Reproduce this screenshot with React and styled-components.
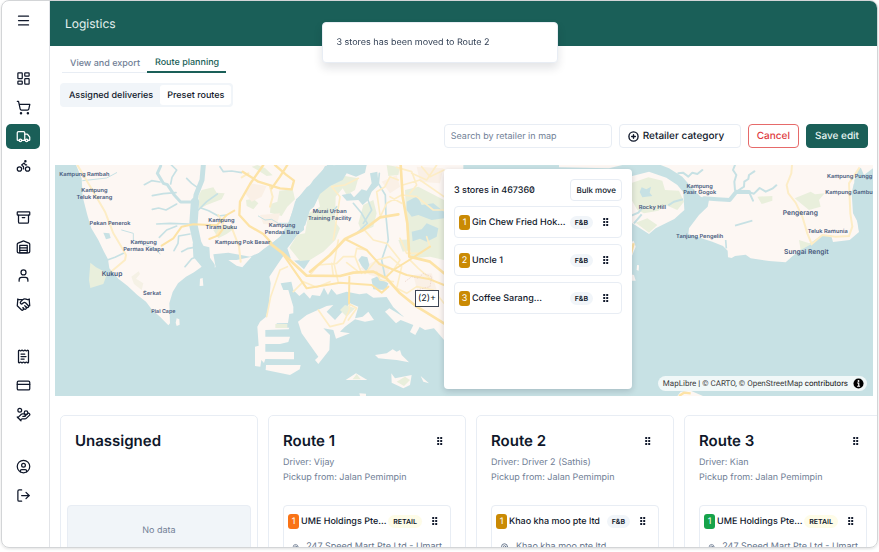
import React from "react";
import styled, { createGlobalStyle, css } from "styled-components";
import {
  Menu, LayoutDashboard, ShoppingCart, Truck, Bike, Archive, User,
  Handshake, ReceiptText, CreditCard, HandCoins, CircleUser, LogOut, CirclePlus, MapPin,
} from "lucide-react";

const c = {
  brand: "#1a5f58",
  ink: "#0f172a",
  body: "#334155",
  muted: "#718096",
  line: "#e8edf4",
  soft: "#f1f5f9",
  water: "#c7e1e4",
  land: "#fdf7f3",
  park: "#e9efdc",
  road: "#fde3a6",
  lane: "#fdedc6",
  label: "#47597c",
};

const Global = createGlobalStyle`
  *, *::before, *::after { box-sizing: border-box; }
  body { margin: 0; background: #fff; text-rendering: geometricPrecision; }
  body, button, input { font-family: Inter, "Liberation Sans", sans-serif; }
  button, input { text-rendering: inherit; }
  h1, h2, h3, p, ul { margin: 0; padding: 0; }
  button { cursor: pointer; }
`;

const Frame = styled.div`
  display: flex;
  height: calc(100vh - 4px);
  margin: 0 1px 4px;
  border: 1px solid #d3d5d7;
  border-radius: 8px;
  overflow: hidden;
  box-shadow: 0 1px 3px rgba(0, 0, 0, 0.12);
  color: ${c.ink};
`;

const Sidebar = styled.nav`
  flex: none;
  width: 48px;
  display: flex;
  flex-direction: column;
  gap: 27px;
  padding: 7px 4px;
  border-right: 1px solid #e2e4e8;
`;

const NavGroup = styled.div`
  display: flex;
  flex-direction: column;
  gap: 4px;
  &:first-child { margin-bottom: 6px; }
`;

const NavButton = styled.button`
  display: grid;
  place-items: center;
  width: 34px;
  height: 25px;
  padding: 0;
  border: 0;
  border-radius: 5px;
  background: ${(p) => (p.$active ? c.brand : "transparent")};
  color: ${(p) => (p.$active ? "#fff" : c.ink)};
`;

const Main = styled.main`
  flex: 1;
  min-width: 0;
  display: flex;
  flex-direction: column;
`;

const Header = styled.header`
  flex: none;
  display: flex;
  align-items: center;
  height: 45px;
  padding: 0 15px;
  background: ${c.brand};
`;

const Title = styled.h1`
  font-size: 12px;
  font-weight: 400;
  line-height: 16px;
  color: #e6f2f0;
`;

const Toast = styled.div`
  position: fixed;
  top: 22px;
  left: 50%;
  width: 236px;
  transform: translateX(-50%);
  padding: 13px 14px;
  border: 1px solid ${c.line};
  border-radius: 4px;
  background: #fff;
  box-shadow: 0 5px 10px rgba(15, 23, 42, 0.12);
  font-size: 9px;
  line-height: 13px;
  color: ${c.body};
  z-index: 5;
`;

const Tabs = styled.div`
  display: flex;
  margin: 8px 12px 0;
`;

const Tab = styled.button`
  height: 19px;
  padding: 1px 7px 0 8px;
  border: 0;
  border-bottom: ${(p) => (p.$active ? `2px solid ${c.brand}` : `1px solid ${c.line}`)};
  background: none;
  font-size: 9px;
  font-weight: 500;
  line-height: 16px;
  color: ${(p) => (p.$active ? c.brand : c.muted)};
`;

const Segments = styled.div`
  display: flex;
  align-self: flex-start;
  margin: 10px 10px 0;
  padding: 2px;
  border-radius: 4px;
  background: ${c.soft};
`;

const Segment = styled.button`
  height: 20px;
  padding: 0 7px;
  border: 0;
  border-radius: 3px;
  background: ${(p) => (p.$active ? "#fff" : "transparent")};
  font-size: 9px;
  font-weight: 500;
  color: ${c.ink};
`;

const Toolbar = styled.div`
  display: flex;
  justify-content: flex-end;
  gap: 7px;
  margin: 17px 9px 0;
`;

const control = css`
  height: 24px;
  border: 1px solid ${(p) => p.$edge || c.line};
  border-radius: 4px;
  background: ${(p) => p.$fill || "#fff"};
`;

const Search = styled.input`
  ${control}
  width: 168px;
  padding: 0 6px;
  font-size: 9px;
  color: ${c.body};
  &::placeholder { color: ${c.muted}; opacity: 1; }
`;

const Action = styled.button`
  ${control}
  display: flex;
  align-items: center;
  gap: 4px;
  padding: 0 8px;
  font-size: 10px;
  font-weight: 500;
  color: ${(p) => p.$text || c.ink};
`;

const CategoryAction = styled(Action)`
  width: 122px;
`;

const MapArea = styled.section`
  position: relative;
  flex: none;
  margin: 17px 4px 0 5px;
  aspect-ratio: 818 / 231;
  background: ${c.water};
`;

const MapDrawing = styled.svg`
  display: block;
  width: 100%;
  height: 100%;
  text { font-family: Inter, "Liberation Sans", sans-serif; font-weight: 600; fill: ${c.label}; text-anchor: middle; }
`;

const Marker = styled.button`
  position: absolute;
  left: 44%;
  top: 54%;
  height: 17px;
  padding: 0 2px;
  border: 1px solid #3c4454;
  background: #fff;
  font-size: 9px;
  line-height: 15px;
  color: ${c.ink};
`;

const StorePanel = styled.aside`
  position: absolute;
  left: calc(50% - 20px);
  top: 4px;
  bottom: 7px;
  width: 188px;
  display: flex;
  flex-direction: column;
  gap: 6px;
  padding: 10px;
  border-radius: 4px;
  background: #fff;
  box-shadow: 0 2px 6px rgba(15, 23, 42, 0.18);
`;

const PanelHead = styled.div`
  display: flex;
  align-items: center;
  justify-content: space-between;
  margin-bottom: -1px;
`;

const PanelTitle = styled.h2`
  font-size: 9px;
  font-weight: 500;
  font-variant-numeric: slashed-zero;
`;

const BulkButton = styled.button`
  ${control}
  height: 22px;
  padding: 0 5px;
  font-size: 8px;
  font-weight: 500;
  color: ${c.ink};
`;

const StoreCard = styled.div`
  ${control}
  height: auto;
  padding: ${(p) => (p.$tall ? "7px 4px 24px" : "7px 4px")};
`;

const StoreLine = styled.div`
  display: flex;
  align-items: center;
  gap: 2px;
  height: 16px;
`;

const Order = styled.span`
  flex: none;
  width: 11px;
  border-radius: 3px;
  background: ${(p) => p.$tone};
  color: #fff;
  font-size: 9px;
  line-height: 15px;
  text-align: center;
`;

const StoreName = styled.h3`
  flex: 1;
  min-width: 0;
  white-space: nowrap;
  font-size: 9px;
  font-weight: 500;
  line-height: 15px;
`;

const Tag = styled.span`
  padding: 0 5px;
  border-radius: 7px;
  background: ${(p) => (p.$retail ? "#fefce8" : c.soft)};
  font-size: 7px;
  font-weight: 600;
  line-height: 13px;
`;

const GripButton = styled.button`
  display: grid;
  place-items: center;
  flex: none;
  width: 22px;
  height: 12px;
  padding: 0;
  border: 0;
  background: none;
  color: ${c.ink};
`;

const Address = styled.p`
  display: flex;
  align-items: center;
  gap: 7px;
  margin: 12px 4px 0;
  font-size: 9px;
  line-height: 12px;
  white-space: nowrap;
  color: #64748b;
`;

const Attribution = styled.div`
  position: absolute;
  right: 6px;
  bottom: 5px;
  display: flex;
  align-items: center;
  gap: 5px;
  height: 15px;
  padding: 0 3px 0 5px;
  border-radius: 8px;
  background: rgba(255, 255, 255, 0.75);
  font: 8px/15px Roboto, Arial, sans-serif;
  color: #111;
  a { color: #404040; text-decoration: none; }
`;

const Board = styled.section`
  flex: 1;
  min-height: 0;
  display: flex;
  gap: 10px;
  margin: 19px 0 0 10px;
  overflow: hidden;
`;

const Column = styled.article`
  flex: none;
  width: 198px;
  height: 240px;
  padding: 14px;
  border: 1px solid ${c.line};
  border-radius: 5px;
`;

const ColumnHead = styled.div`
  display: flex;
  align-items: center;
  justify-content: space-between;
  height: 22px;
`;

const ColumnTitle = styled.h2`
  font-size: 15px;
  font-weight: 600;
  line-height: 22px;
`;

const Details = styled.div`
  height: 53px;
  padding-top: 3px;
  font-size: 9px;
  line-height: 15px;
  color: ${c.muted};
`;

const Empty = styled.div`
  margin: 0 -8px;
  padding: 18px 0 70px;
  border: 1px solid ${c.line};
  border-radius: 4px;
  background: ${c.soft};
  font-size: 9px;
  line-height: 14px;
  text-align: center;
  color: ${c.muted};
`;

function WarehouseIcon({ size, strokeWidth }) {
  return (
    <svg width={size} height={size} viewBox="0 0 24 24" fill="none" stroke="currentColor" strokeWidth={strokeWidth} strokeLinecap="round" strokeLinejoin="round">
      <path d="M22 8.35V20a2 2 0 0 1-2 2H4a2 2 0 0 1-2-2V8.35A2 2 0 0 1 3.26 6.5l8-3.2a2 2 0 0 1 1.48 0l8 3.2A2 2 0 0 1 22 8.35Z" />
      <path d="M6 18h12M6 14h12" />
      <rect x="6" y="10" width="12" height="12" />
    </svg>
  );
}

const navigation = [
  [["Menu", Menu]],
  [["Dashboard", LayoutDashboard], ["Orders", ShoppingCart], ["Logistics", Truck], ["Riders", Bike]],
  [["Inventory", Archive], ["Warehouse", WarehouseIcon], ["Customers", User], ["Partners", Handshake]],
  [["Invoices", ReceiptText], ["Payments", CreditCard], ["Payouts", HandCoins]],
  [["Account", CircleUser], ["Log out", LogOut]],
];

const gold = "#ca8a04";

const panelStores = [
  { order: 1, name: "Gin Chew Fried Hok...", tone: gold, tag: "F&B" },
  { order: 2, name: "Uncle 1", tone: gold, tag: "F&B" },
  { order: 3, name: "Coffee Sarang...", tone: gold, tag: "F&B" },
];

const routes = [
  { name: "Route 1", driver: "Vijay", store: { order: 1, name: "UME Holdings Pte...", tone: "#f97316", tag: "RETAIL", address: "247 Speed Mart Pte Ltd - Umart" } },
  { name: "Route 2", driver: "Driver 2 (Sathis)", store: { order: 1, name: "Khao kha moo pte ltd", tone: gold, tag: "F&B", address: "Khao kha moo pte ltd" } },
  { name: "Route 3", driver: "Kian", store: { order: 1, name: "UME Holdings Pte...", tone: "#16a34a", tag: "RETAIL", address: "247 Speed Mart Pte Ltd - Umart" } },
];

function Grip() {
  return (
    <GripButton aria-label="Reorder">
      <svg width="6" height="8" viewBox="0 0 6 8" fill="currentColor" aria-hidden="true">
        {[0, 3, 6].map((y) => [0, 3].map((x) => <rect key={`${x}-${y}`} x={x + 0.2} y={y} width="2" height="2" rx="0.5" />))}
      </svg>
    </GripButton>
  );
}

function Store({ store }) {
  return (
    <StoreCard $tall={Boolean(store.address)}>
      <StoreLine>
        <Order $tone={store.tone}>{store.order}</Order>
        <StoreName>{store.name}</StoreName>
        <Tag $retail={store.tag === "RETAIL"}>{store.tag}</Tag>
        <Grip />
      </StoreLine>
      {store.address && (
        <Address><MapPin size={9} strokeWidth={2.5} />{store.address}</Address>
      )}
    </StoreCard>
  );
}

const places = [
  [88, 29, 17, "Kampung Rambah"], [118, 77, 17, "Kampung"], [118, 98, 17, "Teluk Kerang"],
  [165, 177, 17, "Pekan Penerok"], [266, 234, 17, "Kampung"], [266, 254, 17, "Permas Kelapa"],
  [171, 330, 20, "Kukup"], [291, 388, 17, "Serkat"], [325, 440, 16, "Piai Cape"],
  [499, 168, 17, "Kampung"], [499, 188, 17, "Tiram Duku"], [563, 234, 17, "Kampung Pok Besar"],
  [681, 183, 17, "Kampung"], [681, 203, 17, "Pendas Baru"],
  [824, 141, 17, "Murai Urban"], [824, 161, 17, "Training Facility"],
  [1792, 128, 17, "Rocky Hill"], [1934, 65, 17, "Kampung"], [1934, 85, 17, "Pasir Gogok"],
  [1934, 215, 17, "Tanjung Pengelih"], [2236, 146, 20, "Pengerang"], [2318, 202, 17, "Teluk Ramunia"],
  [2254, 264, 20, "Sungai Rengit"], [2384, 35, 17, "Kampung Pungg"], [2382, 85, 17, "Kampung Gambu"],
];

function CoastMap() {
  return (
    <MapDrawing viewBox="0 0 2454 693" preserveAspectRatio="xMidYMid slice" role="img" aria-label="Map of the strait">
      <rect width="2454" height="693" fill={c.water} />
      {/* western mainland */}
      <g transform="translate(-15 -15)">
        <path fill={c.land} d="M78 15L95 55L98 110L112 165L124 205L145 240L162 275L174 298L178 325L205 356L233 378L262 405L288 425L305 448L330 470L355 496L360 490L358 430L368 396L384 370L408 350L432 337L455 320L430 290L428 250L478 262L482 322L497 322L490 283L535 278L600 290L628 278L660 255L692 228L716 185L735 135L738 118L770 90L790 60L832 15Z" />
        <path fill={c.land} d="M535 300L560 300L605 290L577 322L560 317Z" />
        <path fill={c.park} d="M121 308L138 322L160 333L170 345L160 372L121 384L117 360Z" />
        <path fill={c.land} d="M450 356L458 354L460 377L449 378ZM380 475L388 478L389 494L380 498L377 488Z" />
        <g fill={c.park}>
          <path d="M445 108L455 90L490 82L500 98L524 100L515 118L470 135L447 148ZM588 120L610 116L625 130L610 148L590 138ZM688 92L728 88L735 118L712 140L695 168L660 158L662 132L682 125ZM605 20L622 15L645 24L668 46L650 48L628 34ZM490 210L530 195L555 205L530 222L505 235Z" />
          <path d="M160 218L178 220L182 234L168 238Z" fill={c.water} />
          <path d="M244 350L266 334L270 342L258 356L280 370L275 390L252 372Z" fill="#f5f1e5" />
        </g>
        <path fill="#faf0e6" d="M600 70L650 78L635 110L605 125L585 100ZM630 165L690 160L680 195L640 192Z" />
        <g fill="none" stroke={c.water} strokeLinecap="round" strokeLinejoin="round">
          <path strokeWidth="15" d="M460 15L456 60L438 105L432 155L430 200" />
          <path strokeWidth="25" d="M435 125L430 195L442 250L466 295L482 318" />
          <path strokeWidth="9" d="M332 18L322 40L340 70L352 74L372 104L392 126L425 126" />
          <path strokeWidth="5" d="M364 15L380 30L366 52L362 72M283 74L305 62L330 66M410 55L425 70L446 85M307 107L340 101L378 98M307 148L326 144L348 150L380 132M320 192L360 190L415 192M328 232L350 210L380 198M372 272L384 250L386 228L420 222M395 275L412 266L432 262M405 320L425 296L440 290M445 150L470 125L502 102M455 145L476 152L505 168L530 165M510 20L520 35L545 33L575 38M172 300L195 292L220 280" />
          <path strokeWidth="3" d="M98 62L170 54L200 38M215 210L250 220L250 240L320 268L330 282M625 168L645 180L665 178L685 190L715 190" />
        </g>
        <g fill="none" stroke={c.road} strokeWidth="6" strokeLinecap="round" strokeLinejoin="round">
          <path stroke={c.lane} d="M82 15L130 95L165 155L190 220L215 262L228 285L225 300L185 334M505 165L520 190L500 225M545 202L567 260L572 305M575 52L595 40M660 80L668 110L660 140" />
          <path d="M335 257L370 235L395 200L430 193L500 196L530 165L553 152M478 237L505 226L520 205" />
          <path strokeWidth="7" d="M640 15L600 72L570 125L568 165L598 198L640 222L665 250L694 275L752 330M578 35L625 65L690 85L725 88L732 62L708 44L675 15M665 85L690 50L712 15" />
        </g>
      </g>
      {/* Singapore and its southern islands */}
      <g transform="translate(525 -15)">
        <path fill={c.land} d="M310 15L700 15L700 520L642 540L612 505L585 510L550 490L515 465L490 442L470 411L430 413L410 400L388 403L350 395L320 404L304 386L294 405L282 383L270 408L246 405L240 416L222 397L208 408L190 390L184 365L152 370L160 390L175 390L190 440L190 460L178 462L174 489L140 490L140 503L178 503L176 508L106 510L106 530L180 530L175 546L150 552L106 552L106 575L192 576L192 598L106 597L102 609L94 600L91 620L75 618L75 560L86 557L82 500L90 485L108 470L116 440L122 370L118 350L145 310L162 285L190 300L222 328L240 300L215 300L185 302L172 265L202 225L222 210L222 175L238 145L260 95L290 67L320 58Z" />
        <path fill={c.land} d="M108 615L212 615L209 628L180 645L107 630Z" />
        <path fill={c.park} d="M282 75L325 65L345 48L385 55L375 90L350 105L338 85L317 110L315 185L330 205L316 240L280 275L240 300L210 303L178 263L202 224L225 220L236 160L270 140L262 105ZM400 135L430 120L440 160L430 200L395 215L385 190ZM525 90L565 80L642 120L642 300L600 290L545 295L530 210ZM136 492L172 492L172 504L136 504ZM505 240L548 238L555 268L518 275ZM350 15L390 15L380 35L350 35ZM470 15L510 22L505 45L475 48Z" />
        <path fill="#faf0e6" d="M390 325L440 300L480 320L470 360L420 345ZM550 345L605 340L620 390L560 385ZM455 65L500 45L510 80L480 100ZM560 20L640 25L630 70L570 65Z" />
        <g fill={c.water}>
          <path d="M318 15L410 15L405 38L378 50L350 40L338 60L300 78L270 102L252 140L240 150L226 195L195 228L160 275L100 300L50 310L100 268L150 232L178 185L195 125L230 82L262 60L285 18Z" />
          <path d="M420 40L442 35L446 75L425 95L415 120L398 135L385 120L350 122L335 105L362 100L372 112L395 88L410 92L425 70Z" />
          <path d="M530 125L562 108L575 135L610 130L642 155L642 175L605 180L565 165L545 170L530 150ZM545 215L575 208L590 190L625 205L620 230L590 245L570 236L548 244ZM385 300L395 288L412 292L418 315L410 335L395 318ZM424 357L440 350L475 370L468 390L430 388Z" />
        </g>
        <path fill="none" stroke={c.water} strokeWidth="5" strokeLinecap="round" strokeLinejoin="round" d="M370 130L395 160L412 190L380 220M448 40L445 70L466 105L468 170L475 240L455 300L465 350M412 115L425 150L400 190M320 140L305 160" />
        <path fill={c.land} d="M204 485L230 465L290 438L310 435L290 455L315 480L360 430L385 440L375 475L398 470L415 455L432 480L405 485L375 478L345 500L330 515L360 520L318 536L310 510L280 505L300 525L298 570L265 612L255 600L265 590L240 555L215 520Z" />
        <path fill={c.park} d="M345 435L375 445L350 470L330 450Z" />
        <path fill={c.land} d="M465 455L478 445L520 470L530 450L545 458L540 475L575 490L556 525L540 516L550 495L512 480L498 490ZM435 585L470 580L488 568L500 575L510 570L515 585L537 607L500 600L475 598L445 595ZM347 660L378 640L412 660ZM484 640L495 655L545 645L540 675L520 685L485 668ZM572 648L597 670L580 665ZM388 700L408 701L408 708L390 708Z" />
        <path fill={c.park} d="M368 658L380 642L392 658ZM500 665L525 650L540 660L522 678Z" />
        <g fill="none" strokeLinecap="round" strokeLinejoin="round">
          <path stroke={c.lane} strokeWidth="5" d="M185 320L230 385M110 470L122 410L150 330L172 320M240 345L265 315L320 310L340 290L375 290L380 265L410 270M265 450L300 500L340 490L358 450L358 432L380 445L355 480M325 240L312 310L325 368M375 290L395 340M385 55L345 75L305 80L330 110L310 240M505 60L480 50L465 80L440 95L450 165M518 75L570 60L642 110M450 172L470 130L515 105L560 110L610 150L642 150M500 22L545 35L560 75L540 100M575 20L600 50L642 30M545 40L590 60L620 15M480 110L515 130M405 212L430 240L470 250L510 300L490 330M538 298L565 325L600 355M405 340L440 300L480 290L515 320L500 385L530 400L560 380L610 390L642 430M510 235L530 280L575 280M190 395L220 365L260 382L300 365M310 348L305 310M385 335L350 308M440 335L450 360L490 365M590 230L600 260" />
          <path stroke={c.road} strokeWidth="6" d="M358 350L357 430M155 277L195 335L230 385L330 368L425 375L455 398L475 380M345 237L410 270L448 312L530 345L600 358L642 375M600 260L538 300L490 330L470 350" />
          <path stroke={c.road} strokeWidth="8" d="M120 250L155 277L230 347L330 348L370 338L430 335L470 355L510 400L560 440L590 458L642 490M240 335L300 285L345 237L400 210L450 172L505 163M512 15L518 110L532 190L538 290L600 305L642 340" />
        </g>
        <path fill="none" stroke="#e9cdbf" strokeWidth="2" strokeDasharray="5 3" d="M525 365L545 350L565 355L580 340L605 350L600 380L560 390" />
      </g>
      {/* eastern islands and mainland */}
      <g transform="translate(1722 -15)">
        <path fill={c.land} d="M-210 15L-20 15L-60 25L-210 22ZM-25 45L10 48L60 35L112 53L145 75L163 97L166 150L136 177L80 205L60 222L10 190L-30 150Z" />
        <path fill={c.park} d="M5 70L58 52L100 62L108 90L150 92L165 125L145 150L110 135L88 152L45 160L25 150L5 115ZM20 188L55 175L85 195L60 218Z" />
        <path fill={c.water} d="M38 82L52 88L66 80L62 98L70 108L40 112L32 96Z" />
        <path fill="none" stroke={c.water} strokeWidth="6" d="M0 170L28 158L45 138M162 118L135 125L118 136M15 190L38 163" />
        <path fill={c.land} d="M95 15L732 15L732 35L700 45L674 72L668 100L672 160L688 190L690 216L662 240L612 246L606 225L580 225L550 245L520 265L492 287L470 307L420 303L365 295L350 284L318 288L308 294L297 292L296 272L282 258L250 245L178 222L180 205L210 165L236 140L240 120L215 110L190 85L160 50L120 25Z" />
        <path fill={c.water} d="M690 25L732 15L732 240L690 215L682 170L674 120L676 60Z" />
        <path fill={c.land} d="M692 15L732 15L732 25L705 45Z" />
        <path fill={c.park} d="M385 110L430 108L430 122L398 132ZM497 115L545 95L558 103L587 100L570 120L575 140L540 150L515 130ZM510 240L548 252L515 270Z" />
        <path fill="none" stroke={c.water} strokeLinecap="round" strokeLinejoin="round" strokeWidth="12" d="M225 115L265 118L302 120L322 95L360 96" />
        <path fill="none" stroke={c.water} strokeLinecap="round" strokeLinejoin="round" strokeWidth="6" d="M318 90L316 65L322 45L312 30L318 15M330 90L345 80L346 65L358 57L360 45L376 34M350 94L375 101L392 84L410 95L430 86L442 76M362 100L372 122M148 40L162 38L178 50L190 38L205 42L220 30" />
        <path fill="none" stroke={c.water} strokeWidth="5" d="M318 197L370 182M290 240L292 265" />
        <path fill="none" stroke={c.lane} strokeWidth="6" d="M489 15L487 40L473 75L478 100L500 128L520 170L535 220L548 252L580 225L620 230L660 228L670 200L664 160L660 70L692 22" />
        <path fill={c.land} d="M0 250L14 242L20 260L8 290L-10 290ZM24 315L30 316L29 332L23 330ZM0 342L15 345L20 362L5 362ZM145 708L155 695L185 692L222 708Z" />
        <path fill="none" stroke={c.road} strokeWidth="7" d="M150 708L165 698L185 700M5 285L14 250" />
      </g>
      {places.map(([x, y, size, name]) => (
        <text key={`${name}-${x}-${y}`} x={x} y={y + 3} fontSize={size}>{name}</text>
      ))}
    </MapDrawing>
  );
}

export default function App() {
  return (
    <>
      <Global />
      <Frame>
        <Sidebar aria-label="Main">
          {navigation.map((group) => (
            <NavGroup key={group[0][0]}>
              {group.map(([label, Icon]) => (
                <NavButton key={label} aria-label={label} $active={label === "Logistics"}>
                  <Icon size={15} strokeWidth={2} />
                </NavButton>
              ))}
            </NavGroup>
          ))}
        </Sidebar>
        <Main>
          <Header><Title>Logistics</Title></Header>
          <Tabs role="tablist">
            <Tab role="tab" aria-selected="false">View and export</Tab>
            <Tab role="tab" aria-selected="true" $active>Route planning</Tab>
          </Tabs>
          <Segments>
            <Segment>Assigned deliveries</Segment>
            <Segment $active>Preset routes</Segment>
          </Segments>
          <Toolbar>
            <Search type="search" aria-label="Search by retailer in map" placeholder="Search by retailer in map" />
            <CategoryAction><CirclePlus size={11} strokeWidth={3} />Retailer category</CategoryAction>
            <Action $edge="#e66a6a" $text="#e03a3e">Cancel</Action>
            <Action $edge={c.brand} $fill={c.brand} $text="#e9f5f3">Save edit</Action>
          </Toolbar>
          <MapArea>
            <CoastMap />
            <Marker>(2)+</Marker>
            <StorePanel>
              <PanelHead>
                <PanelTitle>3 stores in 467360</PanelTitle>
                <BulkButton>Bulk move</BulkButton>
              </PanelHead>
              {panelStores.map((s) => <Store key={s.order} store={s} />)}
            </StorePanel>
            <Attribution>
              <span><a href="#maplibre">MapLibre</a> | <a href="#carto">© CARTO</a>, <a href="#osm">© OpenStreetMap</a> contributors</span>
              <svg width="11" height="11" viewBox="0 0 24 24" aria-hidden="true">
                <circle cx="12" cy="12" r="11" />
                <circle cx="12" cy="6.5" r="2" fill="#fff" />
                <path d="M9 11h3.5v6.5M9 18h6.5" fill="none" stroke="#fff" strokeWidth="2.5" />
              </svg>
            </Attribution>
          </MapArea>
          <Board>
            <Column>
              <ColumnHead><ColumnTitle>Unassigned</ColumnTitle></ColumnHead>
              <Details />
              <Empty>No data</Empty>
            </Column>
            {routes.map((r) => (
              <Column key={r.name}>
                <ColumnHead><ColumnTitle>{r.name}</ColumnTitle><Grip /></ColumnHead>
                <Details>
                  <p>Driver: {r.driver}</p>
                  <p>Pickup from: Jalan Pemimpin</p>
                </Details>
                <Store store={r.store} />
              </Column>
            ))}
          </Board>
        </Main>
      </Frame>
      <Toast role="status">3 stores has been moved to Route 2</Toast>
    </>
  );
}
